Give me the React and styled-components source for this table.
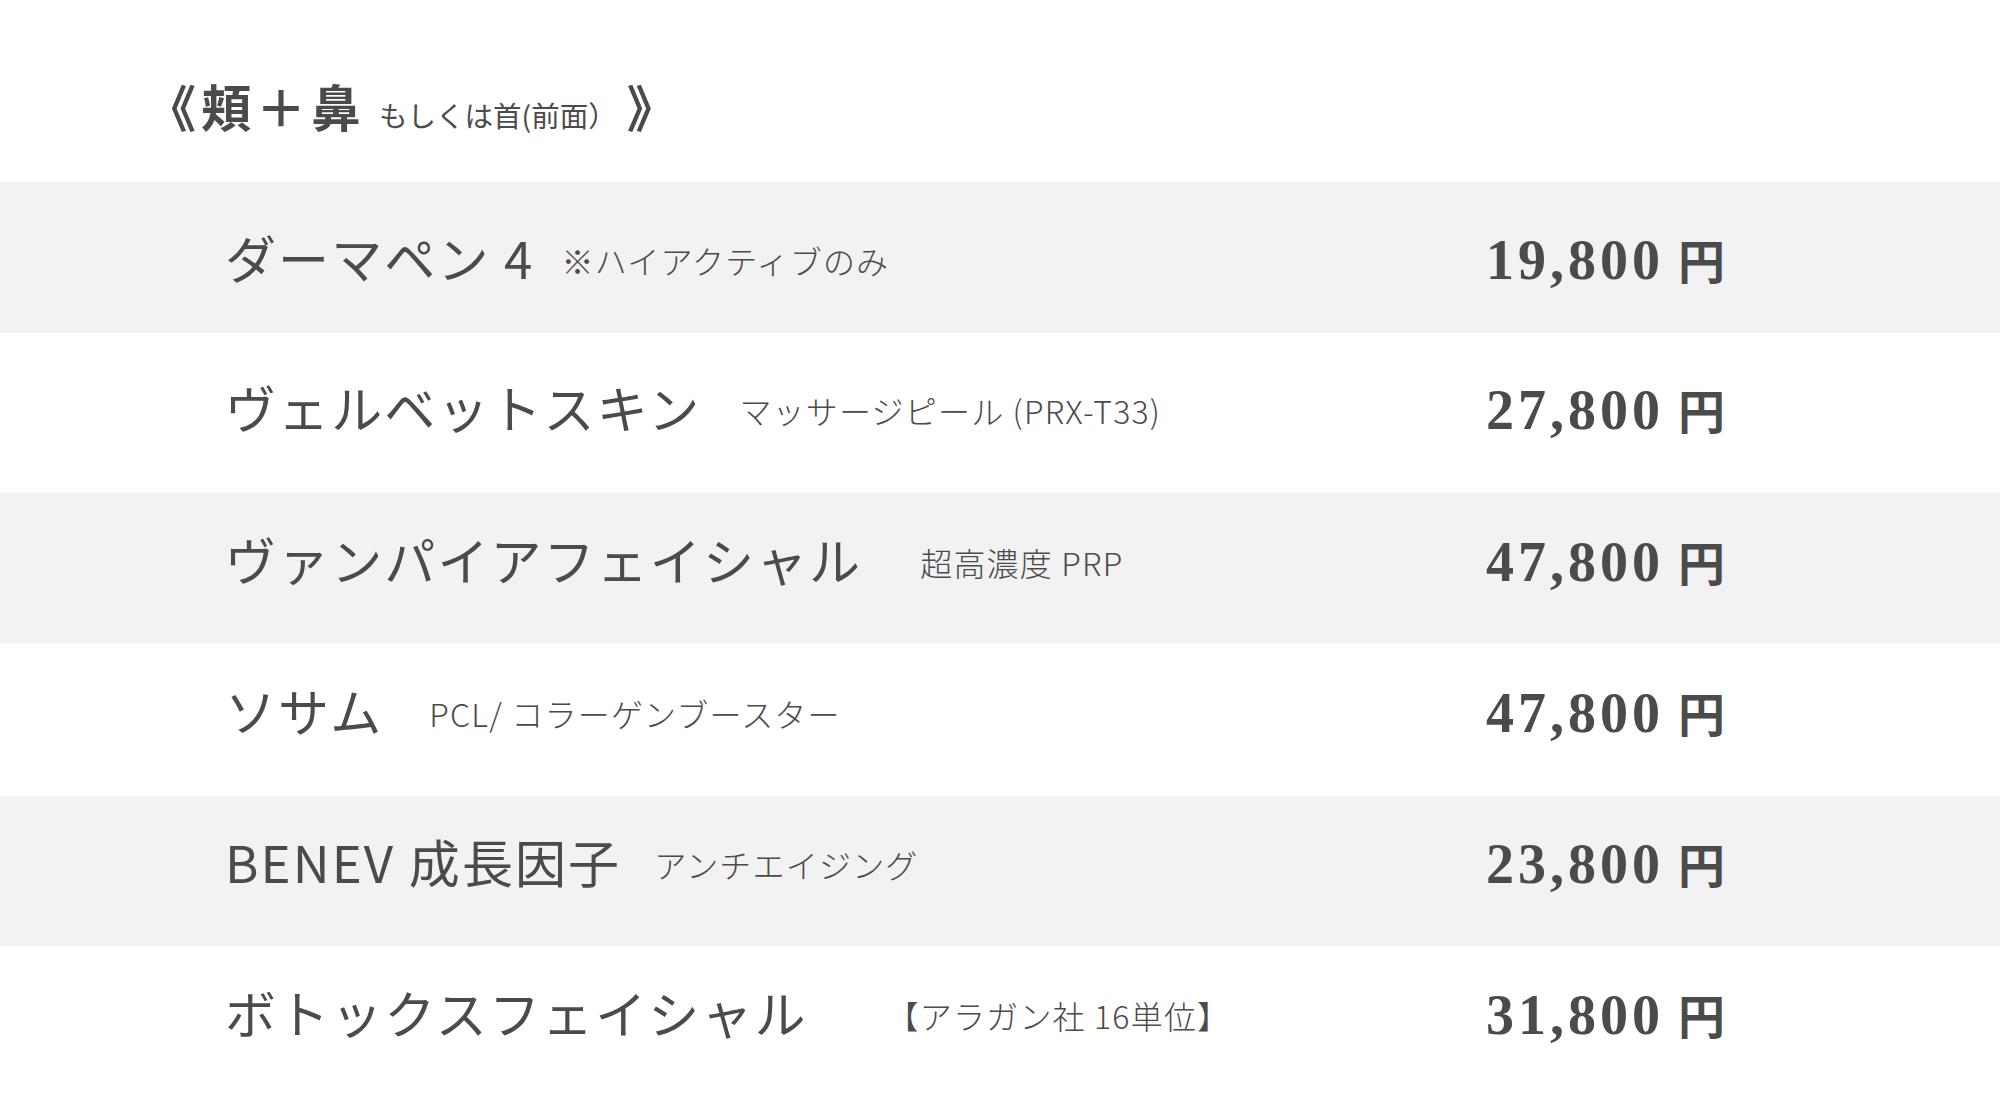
import React from 'react';
import styled, { createGlobalStyle } from 'styled-components';

const GlobalStyle = createGlobalStyle`
	html, body {
		margin: 0;
		padding: 0;
		background: #fff;
	}
	body {
		font-family: "Noto Sans CJK JP", "Noto Sans", sans-serif;
		color: #4b4b4b;
	}
`;

const Page = styled.div`
	width: 2000px;
	height: 1094px;
	overflow: hidden;
	background: #fff;
`;

const Header = styled.h2`
	box-sizing: border-box;
	height: 182px;
	margin: 0;
	padding: 80px 0 0 146px;
	display: flex;
	align-items: baseline;
	font-size: 50px;
	line-height: 1;
	font-weight: 700;
	letter-spacing: 5px;
	color: #4b4b4b;
`;

const HeaderNote = styled.span`
	font-size: 28.5px;
	font-weight: 400;
	letter-spacing: 0;
	margin-left: 13px;
	margin-right: 10px;
`;

const List = styled.ul`
	list-style: none;
	margin: 0;
	padding: 0;
`;

const Row = styled.li`
	box-sizing: border-box;
	height: ${(p) => p.$height}px;
	padding: ${(p) => p.$top}px 0 0 225px;
	display: grid;
	grid-template-columns: 1261px 1fr;
	align-items: baseline;
	background: ${(p) => (p.$shaded ? '#f2f2f2' : '#fff')};
`;

const Name = styled.div`
	display: flex;
	align-items: center;
	white-space: nowrap;
`;

const Title = styled.span`
	font-size: 51px;
	font-weight: 400;
	letter-spacing: 2.1px;
	line-height: 1;
`;

const Note = styled.span`
	margin-left: ${(p) => p.$gap}px;
	margin-top: 4px;
	font-size: 32px;
	font-weight: 300;
	letter-spacing: 1.2px;
	line-height: 1;
`;

const Price = styled.div`
	display: flex;
	align-items: baseline;
	font-family: "Liberation Serif", "Times New Roman", serif;
	font-size: 56px;
	font-weight: 700;
	letter-spacing: 4px;
	line-height: 1;
	white-space: nowrap;
`;

const Yen = styled.span`
	margin-left: 14px;
	font-family: "Noto Sans CJK JP", sans-serif;
	font-size: 47px;
	font-weight: 700;
	letter-spacing: 0;
`;

const menu = [
	{ title: 'ダーマペン 4', note: '※ハイアクティブのみ', gap: 27, price: '19,800', height: 151, top: 50 },
	{ title: 'ヴェルベットスキン', note: 'マッサージピール (PRX-T33)', gap: 38, price: '27,800', height: 160, top: 49 },
	{ title: 'ヴァンパイアフェイシャル', note: '超高濃度 PRP', gap: 58, price: '47,800', height: 150, top: 41 },
	{ title: 'ソサム', note: 'PCL/ コラーゲンブースター', gap: 46, price: '47,800', height: 153, top: 42 },
	{ title: 'BENEV 成長因子', note: 'アンチエイジング', gap: 33, price: '23,800', height: 150, top: 40 },
	{ title: 'ボトックスフェイシャル', note: '【アラガン社 16単位】', gap: 79, price: '31,800', height: 150, top: 41 },
];

const App = () => {
	return (
		<>
			<GlobalStyle />
			<Page>
				<Header>
					《頬＋鼻
					<HeaderNote>もしくは首(前面）</HeaderNote>
					》
				</Header>
				<List>
					{menu.map((item, i) => (
						<Row key={item.title} $shaded={i % 2 === 0} $height={item.height} $top={item.top}>
							<Name>
								<Title>{item.title}</Title>
								<Note $gap={item.gap}>{item.note}</Note>
							</Name>
							<Price>
								{item.price}
								<Yen>円</Yen>
							</Price>
						</Row>
					))}
				</List>
			</Page>
		</>
	);
};

export default App;
